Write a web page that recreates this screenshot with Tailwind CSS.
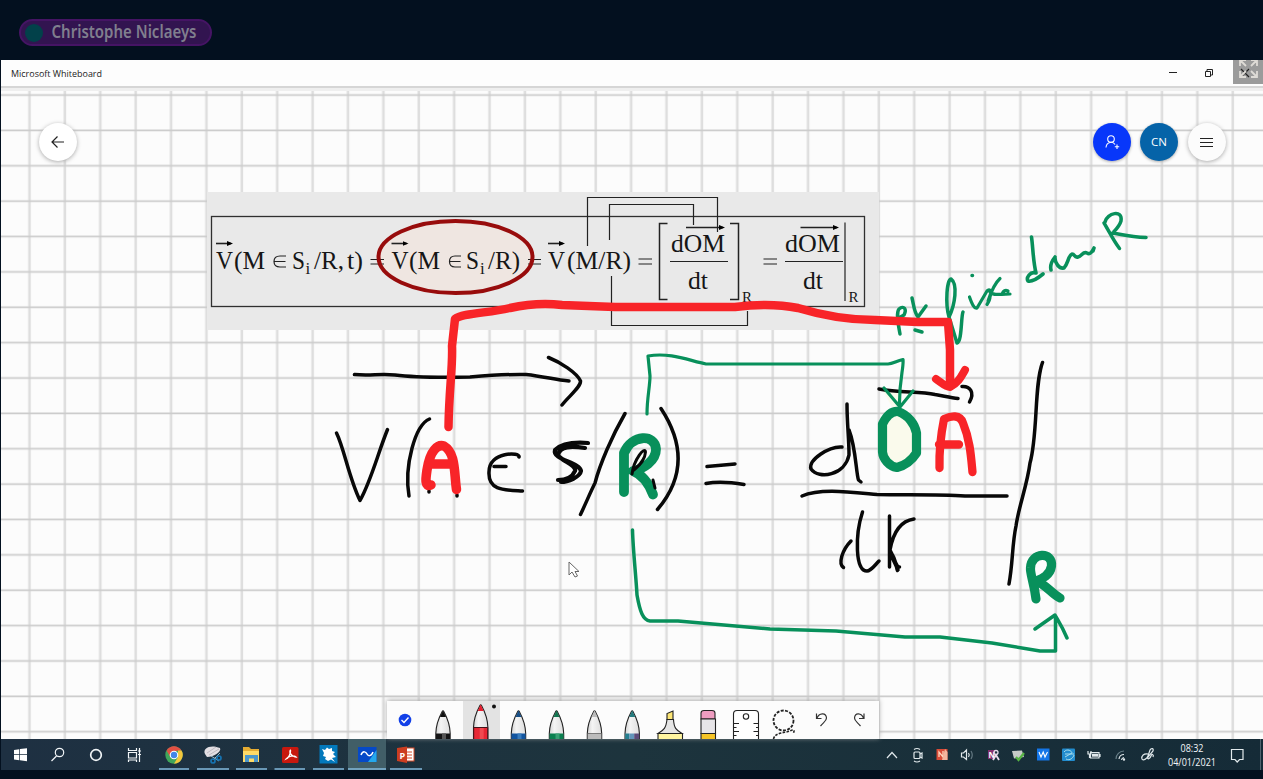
<!DOCTYPE html>
<html lang="fr">
<head>
<meta charset="utf-8">
<title>Microsoft Whiteboard</title>
<script src="https://cdn.jsdelivr.net/npm/@tailwindcss/browser@4"></script>
</head>
<body class="flex h-[779px] w-[1263px] flex-col overflow-hidden bg-[#03101f] font-['Open_Sans','Noto_Sans',sans-serif]">
<header class="flex h-[60px] shrink-0 items-start pt-[19px] pl-[19px]">
  <div class="flex h-[27px] w-[193px] items-center rounded-full border-2 border-[#451464] bg-[#321450] pl-1">
    <span class="size-[18px] shrink-0 rounded-full bg-[#02414a]"></span>
    <svg class="ml-[7px] h-[27px] w-[150px] shrink-0 overflow-visible" viewBox="0 0 150 27"><text x="1.500" y="18.800" textLength="145" lengthAdjust="spacingAndGlyphs" font-family="Noto Sans, sans-serif" font-size="17" font-weight="600" fill="#807f8e">Christophe Niclaeys</text></svg>
  </div>
</header>
<main class="relative ml-px flex h-[679px] shrink-0 flex-col bg-[#fcfcfc]">
  <svg class="absolute inset-0 h-[679px] w-[1262px]" viewBox="1 60 1262 679">
    <defs>
      <pattern id="grid" x="12" y="77" width="35.39" height="35.37" patternUnits="userSpaceOnUse">
        <path d="M17.500 0V35.37" stroke="#dedede" stroke-width="2.600"/>
        <path d="M0 18H35.39" stroke="#cccccc" stroke-width="1.700"/>
      </pattern>
      <marker id="vec" markerUnits="userSpaceOnUse" markerWidth="6" markerHeight="6" refX="4" refY="2.500" orient="auto"><path d="M0 0L6 2.500L0 5Z"/></marker>
    </defs>
    <rect x="1" y="85" width="1262" height="654" fill="url(#grid)"/>
    <rect x="1" y="85" width="1262" height="3" fill="#d6d6d6"/>
    <rect x="1" y="88" width="1262" height="3" fill="#efefef"/>
    <!-- pasted formula -->
    <path d="M207 192H879V330H207Z" fill="#e9e9e9"/>
    <rect x="211.500" y="216.500" width="653" height="90" fill="none" stroke="#303030" stroke-width="1.300"/>
    <ellipse cx="455.500" cy="257" rx="77" ry="36" fill="#efe6e1"/>
    <g font-family="Liberation Serif, serif" font-size="26" fill="#161616">
      <text x="216" y="268.500" textLength="17" lengthAdjust="spacingAndGlyphs">V</text>
      <text x="234" y="268.500" textLength="31" lengthAdjust="spacingAndGlyphs">(M</text>
      <text x="292" y="268.500" textLength="13" lengthAdjust="spacingAndGlyphs">S</text>
      <text x="305.500" y="274" font-size="17">i</text>
      <text x="314" y="268.500" textLength="30" lengthAdjust="spacingAndGlyphs">/R,</text>
      <text x="347" y="268.500" textLength="16" lengthAdjust="spacingAndGlyphs">t)</text>
      <text x="391.500" y="268.500" textLength="17" lengthAdjust="spacingAndGlyphs">V</text>
      <text x="409" y="268.500" textLength="31" lengthAdjust="spacingAndGlyphs">(M</text>
      <text x="466" y="268.500" textLength="13" lengthAdjust="spacingAndGlyphs">S</text>
      <text x="480" y="274" font-size="17">i</text>
      <text x="488" y="268.500" textLength="32" lengthAdjust="spacingAndGlyphs">/R)</text>
      <text x="548" y="268.500" textLength="17" lengthAdjust="spacingAndGlyphs">V</text>
      <text x="567" y="268.500" textLength="64" lengthAdjust="spacingAndGlyphs">(M/R)</text>
      <text x="671" y="251.500" textLength="54" lengthAdjust="spacingAndGlyphs">dOM</text>
      <text x="688" y="288.500" textLength="20" lengthAdjust="spacingAndGlyphs">dt</text>
      <text x="785" y="251.500" textLength="55" lengthAdjust="spacingAndGlyphs">dOM</text>
      <text x="803" y="288.500" textLength="20" lengthAdjust="spacingAndGlyphs">dt</text>
      <text x="742" y="301.500" font-size="15">R</text>
      <text x="848.500" y="301.500" font-size="15">R</text>
    </g>
    <g fill="none" stroke="#222" stroke-width="1.200">
      <path d="M286 256H280Q274 256 274 261.500T280 267H286M274 261.500H285.500M461 256H455Q449.500 256 449.500 261.500T455 267H461M449.500 261.500H460.500"/>
      <path d="M370.500 259.500H384M370.500 264H384M528 259.500H541M528 264H541M638.500 259H652M638.500 264H652M763.500 259H777M763.500 264H777"/>
      <path d="M670 261.500H728M785 261.500H843"/>
      <path d="M667.500 223.500H659.500V299.500H667.500M730 223.500H738.500V299.500H730" stroke-width="1.500"/>
      <path d="M845 222.500V301"/>
      <path d="M587.500 246V197.500H717.500V232M609.500 240V204.500H693.500V225M611.500 276V325.500H747.500V311"/>
      <g stroke-width="1.600"><path marker-end="url(#vec)" d="M216 243.500H231"/><path marker-end="url(#vec)" d="M391.500 243.500H406.500"/><path marker-end="url(#vec)" d="M548 243.500H563"/><path marker-end="url(#vec)" d="M686 227.500H723"/><path marker-end="url(#vec)" d="M800.500 227.500H837"/></g>
    </g>
    <ellipse cx="455.500" cy="257" rx="77" ry="36" fill="none" stroke="#980c0c" stroke-width="4"/>
    <path d="M883 391L897 391L903 415Q914 423 913 440V455Q906 466 898 470Q886 462 886 450V425L895 412Z" fill="#fafaec"/>
    <!-- black ink -->
    <g fill="none" stroke="#080808" stroke-width="3.500" stroke-linecap="round" stroke-linejoin="round">
      <path d="M354.500 374.500C370 376 380 373.500 395 375C415 377.500 445 377.500 470 377C495 375 510 374 526 374.500C545 376.500 555 380 569 381M548.500 357.500C560 362 577 373 580.500 381C581 387 569 396 562 405"/>
      <path d="M336.500 433C344 448 349 478 360 500.500C371 481 378 453 387.500 429.500"/>
      <path d="M429.500 419C415 425 404 466 409 496M429 491V492M457 495V496"/>
      <path d="M519 457C521 452 489 451 489 472C488 491 505 490 522.500 491M494 466.500H506"/>
      <path d="M588 443C575 442 562 443 555 450C552 460 580 462 581 471C580 477 568 482 561 482M585 448C571 446 560 446 558 455C561 461 577 465 575 471C572 478 566 480 558 480" stroke-width="4.200"/>
      <path d="M625 413.500C612 436 600 464 595 483C590 493 586 503 580.500 514.500"/>
      <path d="M661 408.500C683 442 686 476 657.500 509.500"/>
      <path d="M707 466.500L735 464M706 483.500C718 481 730 482 744 484.500"/>
      <path d="M847 404C847 424 849 438 849 455C845 475 819 480 811 469C808 460 829 446 842 447M849 430C856 448 856 473 858.500 480L861 482"/>
      <path d="M802 496C820 488 850 492 877 494.500C910 495 940 494 965 496H1007"/>
      <path d="M851 541C842 550 838 564 843.500 567.500M862.500 512C855 535 855 571 867 571C871 571 875 565 879 561M889.500 516V567M914 519C900 521 893 533 890 550C894 557 896 567 899.500 567M891 553C896 558 896 568 897.500 570.500M891 555L898 570"/>
      <path d="M879 389C900 393 920 391 935 394.500C944 396 951 398 958 398.500M962 386.500C970 386 975 392 969.500 402"/>
      <path d="M1042.500 362.500C1034 385 1038 435 1030 463C1027 486 1019 505 1016 526C1012 545 1013 562 1009 584"/>
    </g>
    <!-- green ink -->
    <g fill="none" stroke="#08905b" stroke-width="3.500" stroke-linecap="round" stroke-linejoin="round">
      <path d="M647 414C647 398 650 386 650 376L648 356C671 352 690 361 706 364H888C893 364 896 361 903 359.500C904 368 899 380 899.500 406M884 388L900 407L913 391" stroke-width="3.200"/>
      <path d="M632.500 530C633 550 636 576 637 595C640 612 643 620 650 621H678L770 629L836 631L905 637H940L992 643L1040 651H1055.500V617M1035 629L1055 615C1059 622 1062 626 1067 638"/>
      <path d="M900 334C898 323 896 313 899 309C904 305 907 309 904 315L897 319M912 298C914 306 914 312 918 317L926 306M915 330L922 332"/>
      <path d="M949 317C945 303 947 279 951 279C958 284 955 305 949 317L957 343C962 342 961 316 963 312M972 275.500H972.500"/>
      <path d="M969.500 297C972 304 974 309 977 308L987 291C990 288 992 291 990 297C990 299 988 303 987 304.500M1000 278.500C994 284 990 295 988 301M990 292C993 296 999 294 1010 294M1002 294Q1004 289 1008 291" stroke-width="3.200"/>
      <path d="M1031.500 237C1033 247 1033 261 1036 273C1030 271 1026 278 1028 281C1032 282 1037 279 1043 274M1055 257C1051 262 1050 266 1051 270M1055 258C1055 263 1059 269 1064 268C1068 264 1068 256 1072 254C1075 254 1074 258 1078 257C1082 256 1083 251 1087 253C1090 255 1092 252 1094 248L1093 251" stroke-width="3.600"/>
      <path d="M1104 223C1109 231 1113 240 1119.500 248.500M1105 222C1107 213 1123 209 1121 221C1119 228 1111 234 1113 233C1120 234 1130 237 1146 237.500"/>
    </g>
    <g fill="none" stroke="#08905b" stroke-width="9.200" stroke-linecap="round" stroke-linejoin="round">
      <path d="M624 492V453C632 434 655 434 656 449C656 461 643 469 633 471C643 475 649 484 653 494.500" stroke-width="9.800"/>
      <path d="M882.500 424C888 413 893 411 898 411.500C908 415 915 424 916.500 433V453C910 463 903 466 897 467.500C889 466 883 459 882.500 452Z"/>
      <path d="M1036 599C1034 582 1030 574 1030.500 568C1031 552 1053 551 1051.500 566C1050 576 1041 579 1036 581C1044 583 1052 594 1060 598"/>
    </g>
    <path d="M633 466C634 456 645 446 646 452C645 462 638 465 633 466Z" fill="#f6faf2"/>
    <path d="M632 474C634 459 645 446 645.500 452C645 461 638 466 634 470M653 480L655 488" fill="none" stroke="#080808" stroke-width="3" stroke-linecap="round"/>
    <!-- red ink -->
    <g fill="none" stroke="#f82428" stroke-width="8.500" stroke-linecap="round" stroke-linejoin="round">
      <path d="M448.500 427C449 390 453 365 452 346L455 319C462 313 490 313 510 308C528 304 545 303 562 305L615 307H735C758 304 778 304 798 308C821 315 845 320 875 320L918 322H948L950 350V386"/>
      <path d="M936 379C943 384 946 387 950 387C959 382 961 377 965 370" stroke-width="8"/>
      <path d="M431 485C424 488 426 477 427 470C430 450 438 444 444 446C456 453 454 473 456.500 489.500M430 464H452" stroke-width="9.500"/>
      <path d="M939.500 468C939 450 941 434 944 419C951 416 960 414 963 423C970 440 971 456 972.500 472M939 444.500H959" stroke-width="8.300"/>
    </g>
    <path d="M569 562V575L572 572L575 577L577.500 576L575 571.500H579Z" fill="#fff" stroke="#666"/>
  </svg>
  <div class="relative flex h-[25.500px] shrink-0 items-start bg-[#fdfdfd] pl-2.5">
    <svg class="h-[25px] w-[1150px]" viewBox="11 60 1150 25"><text x="11" y="76.700" textLength="91" lengthAdjust="spacingAndGlyphs" font-family="Open Sans, sans-serif" font-size="9.700" fill="#222">Microsoft Whiteboard</text></svg>
    <svg class="h-[25px] w-[102px]" viewBox="1161 60 102 25" fill="none">
      <path d="M1169 72.500H1177" stroke="#222"/><path d="M1205.500 71.500H1210.500V76.500H1205.500ZM1207 71.500V69.500H1212.500V75H1210.500" stroke="#222"/>
      <rect x="1233" y="59" width="30" height="25" fill="#9b9b9b"/>
      <path d="M1241 69L1249 77M1249 69L1241 77" stroke="#222" stroke-width="1.200"/>
      <path d="M1241 61L1246 66M1240 66V60H1246M1251 66L1256 61M1251 60H1257V66M1241 76L1246 71M1240 71V77H1246M1251 71L1256 76M1251 77H1257V71" stroke="#dedbd6" stroke-width="1.800"/>
    </svg>
  </div>
  <div class="relative flex items-center pt-[37px] pr-[37.500px] pl-[38px]">
    <button class="flex size-[38px] items-center justify-center rounded-full bg-white shadow-[0_1px_4px_#aaa]"><svg class="size-4" viewBox="0 0 16 16" fill="none" stroke="#222" stroke-width="1.200"><path d="M14 8H2M7.500 2.500L2 8L7.500 13.500"/></svg></button>
    <div class="ml-auto flex gap-[9.500px]">
      <button class="flex size-[38px] items-center justify-center rounded-full bg-[#0837fa] shadow-[0_1px_3px_#aaa]"><svg class="size-4" viewBox="0 0 16 16" fill="none" stroke="#fff" stroke-width="1.100"><circle cx="7" cy="5" r="3.300"/><path d="M2 13.500C2.500 7.500 9 7 11 10.500M13 10.500V15M10.800 12.700H15.200"/></svg></button>
      <button class="flex size-[38px] items-center justify-center rounded-full bg-[#0563a8] pt-px text-[11.500px] font-medium text-white shadow-[0_1px_3px_#aaa]">CN</button>
      <button class="flex size-[38px] items-center justify-center rounded-full bg-[#fcfcfc] shadow-[0_1px_4px_#aaa]"><svg class="size-4" viewBox="0 0 16 16" stroke="#222" stroke-width="1.200"><path d="M1 4.500H14M1 8.500H14M1 12.500H14"/></svg></button>
    </div>
  </div>
  <div class="relative mt-auto ml-[386px] h-[38px] w-[492px] shrink-0 bg-[#fcfcfc] shadow-[0_-1px_5px_#aaa]">
    <svg class="h-[38px] w-[492px]" viewBox="387 701 492 38">
      <defs>
        <linearGradient id="barrel"><stop stop-color="#d2d2d2"/><stop offset=".35" stop-color="#f4f4f4"/><stop offset="1" stop-color="#dedede"/></linearGradient>
        <path id="body" d="M-7.200 24V18C-7 10-3.500 1-.8-4Q0-5.500 .8-4C3.500 1 7 10 7.200 18V24Z" fill="url(#barrel)" stroke="#222" stroke-width="1.100"/>
        <path id="tip" d="M-3 1.500L0-5L3 1.500Z"/>
      </defs>
      <rect x="463" y="701" width="37" height="38" fill="#e3e3e3"/>
      <circle cx="405" cy="720" r="6.300" fill="#1240e8"/><path d="M401.500 720L404 722.500L408.500 717.500" fill="none" stroke="#fff" stroke-width="1.400"/>
      <g transform="translate(443 715.500)"><use href="#body"/><use href="#tip" fill="#111"/><path d="M-7 18H7V24H-7Z" fill="#151515"/><path d="M-1 18H3V24H-1Z" fill="#555"/></g>
      <g transform="translate(480.700 709.500)"><path d="M-7.200 30V18C-7 10-3.500 1-.8-4Q0-5.500 .8-4C3.500 1 7 10 7.200 18V30Z" fill="url(#barrel)" stroke="#222" stroke-width="1.100"/><use href="#tip" fill="#e62030"/><path d="M-7 18H7V30H-7Z" fill="#e62734" stroke="#421318"/><path d="M-1 18.500H3V30H-1Z" fill="#f04a50"/></g>
      <circle cx="494" cy="706.500" r="2" fill="#111"/>
      <g transform="translate(518.500 715.500)"><use href="#body"/><use href="#tip" fill="#174f87"/><path d="M-7 18H7V24H-7Z" fill="#1255a0"/><path d="M-1 18H3V24H-1Z" fill="#397cbd"/></g>
      <g transform="translate(556.500 715.500)"><use href="#body"/><use href="#tip" fill="#127650"/><path d="M-7 18H7V24H-7Z" fill="#0b8050"/><path d="M-1 18H3V24H-1Z" fill="#39a074"/></g>
      <g transform="translate(594.500 715.500)"><use href="#body"/><use href="#tip" fill="#bbb"/><path d="M-7 18H7V24H-7Z" fill="#bcbcbc" stroke="#555" stroke-width=".7"/></g>
      <g transform="translate(632.200 715.500)"><use href="#body"/><use href="#tip" fill="#247b7e"/><path d="M-7 18H-3V24H-7Z" fill="#267f90"/><path d="M-3 18H2V24H-3Z" fill="#6295ba"/><path d="M2 18H7V24H2Z" fill="#5b4b79"/></g>
      <g stroke="#222" stroke-width="1.100">
        <path d="M667 719.500V713.500L673 711V719.500Z" fill="#fce575"/><path d="M667 719.500H673.500C674 728 676 730 682 733.500H658C664 730 666 728 667 719.500Z" fill="#e5e5e5"/><path d="M658 733.500H682.500V740H658Z" fill="#fff5a0"/>
        <path d="M701 719V713Q701 710.500 704 710.500H712Q715 710.500 715 713V719Z" fill="#ee9cc0"/><path d="M701 719H715.500V733.500H701Z" fill="#e7e5e8"/><path d="M701 733.500H715.500V740H701Z" fill="#f6c426"/>
        <path d="M733.500 740V714Q733.500 710.500 737 710.500H755Q758.500 710.500 758.500 714V740" fill="#fff"/><circle cx="746" cy="716.500" r="2.700" fill="#fff"/><path fill="none" d="M734 723.500H739M734 731.500H739M734 727.500H736.500M734 735.500H736.500M758 723.500H753.500M758 731.500H753.500M758 727.500H756M758 735.500H756"/>
      </g>
      <circle cx="783.500" cy="720.500" r="10" fill="none" stroke="#222" stroke-width="1.800" stroke-dasharray="3 1.400"/>
      <path d="M773.500 739C775 732 785 733 790 731Q796 728 793 734" fill="none" stroke="#222" stroke-width="1.600" stroke-dasharray="2.600 1.300"/>
      <path d="M816.500 713.500V718.500H821.500M817 718C819 713 826 712 826.500 718C826.500 721 824 722 820.500 726M864 713.500V718.500H859M863.500 718C861.500 713 855 712 854.500 718C854.500 721 857 722 860.500 726" fill="none" stroke="#333" stroke-width="1.200"/>
    </svg>
  </div>
</main>
<footer class="ml-px flex h-[31px] shrink-0 bg-linear-to-r from-[#1e3042] via-[#1d343d] to-[#152b37]">
  <svg class="h-[31px] w-[1262px]" viewBox="1 739 1262 31" fill="none">
    <g fill="#fff"><path d="M14 750L19.300 749.200V754.300H14ZM20 749.100L27 748.200V754.300H20ZM14 755H19.300V760.200L14 759.500ZM20 755H27V761.300L20 760.300Z"/></g>
    <g stroke="#f1f5f7" stroke-width="1.200"><circle cx="59.500" cy="752.500" r="4.200"/><path d="M56.500 756L51.500 761"/><circle cx="96" cy="755" r="5.300" stroke-width="1.700"/><path d="M128.500 748V750.500H136.500V748M128.500 752.500H136.500V758H128.500ZM128.500 762V760H136.500V762M139.500 748V762M138 751H141M138 754.500H141"/></g>
    <rect x="348" y="739" width="38" height="31" fill="#415e67"/>
    <path d="M159 769H189M197 769H229M236 769H267M274.500 769H305M313 769H344M348 769H386M390 769H422" stroke="#82b9db" stroke-width="1.600"/>
    <circle cx="174" cy="755" r="8.700" fill="#40a65a"/><path d="M166.500 750.600A8.700 8.700 0 0 1 181.500 750.600L174 751Z" fill="#e34f43"/><path d="M166.500 750.600L170.400 757L174 751L178 750.600Z" fill="#e34f43"/><path d="M181.500 750.600A8.700 8.700 0 0 1 174 763.700L178 757V750.600Z" fill="#f3c63d"/><circle cx="174" cy="755" r="4.300" fill="#fff"/><circle cx="174" cy="755" r="3.200" fill="#4386e8"/>
    <path d="M205 754C202 748 211 744 220 748C222 752 213 757 207 757Z" fill="#e3dfe3"/><path d="M207 753L216 747M209 755L219 749" stroke="#b5b0b8" stroke-width=".8"/>
    <path d="M211 756L219 761M220 753L213 760" stroke="#98bacb"/><circle cx="213" cy="761" r="2" stroke="#1673b1" stroke-width="1.700"/><circle cx="219" cy="758" r="2" stroke="#1673b1" stroke-width="1.700"/>
    <path d="M243 747H249L251 749H259V762H243Z" fill="#e5ac32"/><path d="M243 751H259V762H243Z" fill="#ffda67"/><path d="M245 755H258V762H254V758.500H249V762H245Z" fill="#4a96cc"/>
    <rect x="282" y="747" width="16.500" height="16" rx="1.500" fill="#c8180e"/><path d="M286 759C291 757 291 747 290 751C289 755 295 757 296 757C294 755 288 756 286 759Z" stroke="#fff" stroke-width="1.300"/>
    <rect x="319.500" y="745" width="18" height="18.500" fill="#0379bc"/><path d="M322 749L325 750L327 747.500L329 749L332 748V751L335 752L333 754L336 757L332 758L335 762L331 759.500L328 761L325 759L326 757L323 756L324 753Z" fill="#fff"/>
    <path d="M358 747H376.500V762H358Z" fill="#0549c8"/><path d="M368 762L376.500 750V762Z" fill="#24a8ec"/><path d="M361 755C363 750 366 752 367 754S371 757 373 752" stroke="#fff" stroke-width="1.500"/>
    <rect x="403" y="748" width="11" height="13" fill="#fff" stroke="#d44a28"/><path d="M407 752H412M407 755H412M407 758H412" stroke="#d44a28"/><path d="M397 748L407 746.500V763L397 761Z" fill="#cb3d20"/><text x="399.500" y="758.500" fill="#fff" font-family="Open Sans, sans-serif" font-size="9" font-weight="700">P</text>
    <g stroke="#e1e9ec" stroke-width="1.200">
      <path d="M887 758L892 752.500L897 758"/><rect x="914" y="752" width="6" height="6.500" rx="1"/><path d="M920 754L922 753V758L920 757M914 749.500Q917 747.500 920 749.500M914 761Q917 763 920 761"/>
      <path d="M961.500 753H963.500L966.500 750V759.500L963.500 757H961.500ZM968.500 753Q970 755 968.500 757"/>
      <path d="M971 751Q973.500 755 971 759" stroke="#647982"/>
      <path d="M1090.500 752.500H1099V758H1090.500ZM1100 754V757M1088 751V754H1091V751M1089.500 754V758"/><path d="M1092 755.200H1098" stroke-width="3"/>
      <path d="M1119 759A5 5 0 0 1 1124 754.500M1121.500 760A3 3 0 0 1 1124 757.500"/><path d="M1116 759A8 8 0 0 1 1124 751" stroke="#687f88"/><circle cx="1124" cy="759.500" r=".6"/>
      <path d="M1148 754C1144 753 1141 756 1142 759C1143 761 1147 759 1148 756L1150 750C1151 748 1154 748 1153 751L1148 757C1147 760 1150 759 1151 756C1152 753 1154 755 1153 757"/>
      <path d="M1231.500 749.500H1243V759.500H1239.500L1237.200 762L1235 759.500H1231.500Z"/>
    </g>
    <rect x="936.500" y="749" width="11" height="11" fill="#d94b37"/><path d="M939 757V752L943 757V751" stroke="#ffd5bd" stroke-width="1.300"/><path d="M945 749L947.500 752V760L942 760Z" fill="#f5b59d"/>
    <rect x="988" y="750" width="7" height="9" fill="#85316f"/><text x="988.500" y="758" fill="#fff" font-family="Open Sans, sans-serif" font-size="8" font-weight="700">N</text><circle cx="996" cy="752.500" r="2" stroke="#eadbea" stroke-width="1.300"/><path d="M993 760L996 755L999 760" stroke="#eadbea" stroke-width="1.800"/>
    <path d="M1012 751L1022 750.500L1024 757L1014 758.500Z" fill="#c7cbc8"/><path d="M1016 757L1018.500 760L1024 753" stroke="#56b443" stroke-width="2.200"/>
    <rect x="1037" y="748.500" width="12.500" height="12" fill="#1476e8"/><path d="M1039 752L1041 757L1043.200 752L1045 757L1047.500 752" stroke="#fff" stroke-width="1.100"/>
    <rect x="1062" y="748.500" width="13" height="12.500" rx="1" fill="#228cce"/><path d="M1064 752C1067 748 1072 751 1072 753L1065 757M1065 754H1074M1066 759C1070 761 1073 758 1074 755" stroke="#a4daeb"/>
    <g fill="#f2f6f8" font-family="Open Sans, sans-serif" font-size="10"><text x="1180.500" y="751.500" textLength="23" lengthAdjust="spacingAndGlyphs">08:32</text><text x="1168" y="766" textLength="48" lengthAdjust="spacingAndGlyphs">04/01/2021</text></g>
    <path d="M1260.500 739V770" stroke="#50636e"/>
  </svg>
</footer>
</body>
</html>
